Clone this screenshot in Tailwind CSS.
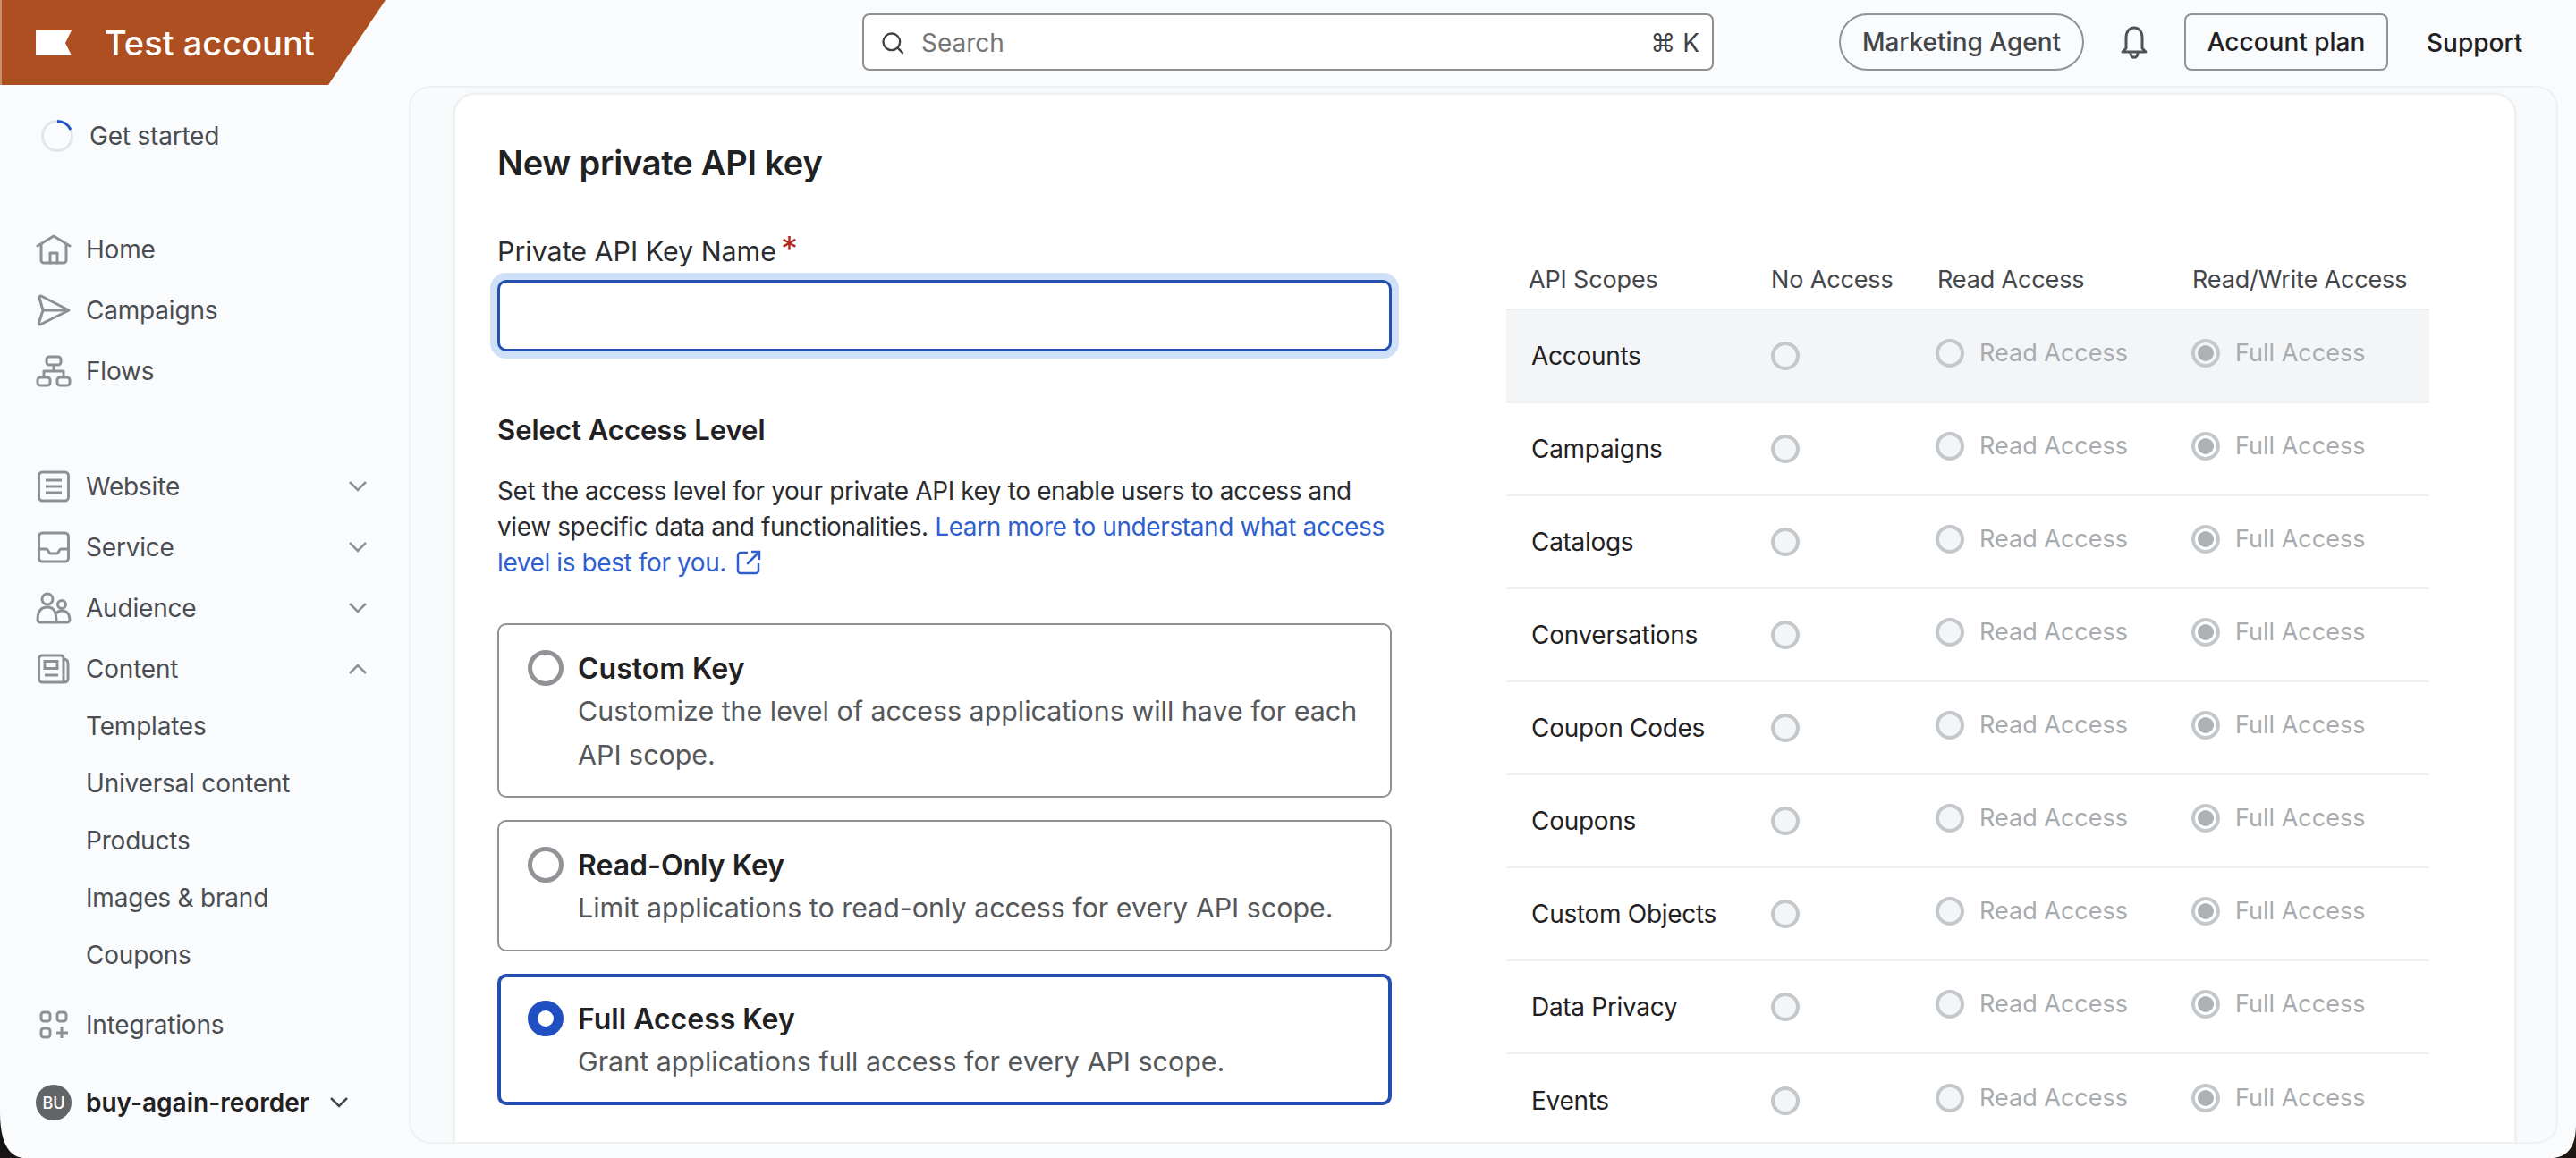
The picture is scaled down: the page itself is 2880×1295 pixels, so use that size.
<!DOCTYPE html>
<html lang="en">
<head>
  <meta charset="UTF-8">
  <title>New private API key</title>
  <script src="https://cdn.jsdelivr.net/npm/@tailwindcss/browser@4"></script>
</head>
<body class="relative h-[1295px] w-[2880px] overflow-hidden bg-[#fafbfd] font-['Inter',sans-serif] text-[28px] text-[#1f2123]">

  <!-- Top bar -->
  <header class="flex h-[96px] items-start">
    <div class="flex h-[95px] w-[431px] items-center border-l-2 border-[#c98f70] bg-[#ad4f20] pl-[38px] [clip-path:polygon(0_0,100%_0,367px_100%,0_100%)]">
      <svg class="h-[28px] w-[40px]" viewBox="0 0 40 28"><path fill="#fff" d="M0 0H40L33 14L40 28H0Z"/></svg>
      <span class="ml-[37px] text-[38px] leading-[48px] font-medium text-white">Test account</span>
    </div>
    <div class="ml-[533px] mt-[15px] flex h-[64px] w-[952px] items-center rounded-[8px] border-2 border-[#8d8f91] bg-white pl-[18px] pr-[14px] pt-[2px]">
      <svg class="h-[28px] w-[28px] text-[#3f4245]" viewBox="0 0 24 24" fill="none" stroke="currentColor" stroke-width="2" stroke-linecap="round"><circle cx="11" cy="11" r="8"/><path d="M17 17l4.500 4.500"/></svg>
      <span class="ml-[18px] text-[#747678]">Search</span>
      <span class="ml-auto text-[#3f4245]">⌘ K</span>
    </div>
    <div class="ml-[140px] mt-[15px] flex h-[64px] w-[274px] items-center justify-center rounded-full border-2 border-[#909294] font-medium text-[#43464a]">Marketing Agent</div>
    <svg class="ml-[38px] mt-[29px] h-[38px] w-[36px] text-[#505356]" viewBox="0 0 36 38" fill="none" stroke="currentColor" stroke-width="3" stroke-linejoin="round"><path d="M9 25V13C9 6 13 2 18 2s9 4 9 11v12l4 4H5Z"/><path d="M14 30c0 7 8 7 8 0"/></svg>
    <div class="ml-[38px] mt-[15px] flex h-[64px] w-[228px] items-center justify-center rounded-[8px] border-2 border-[#909294] font-medium">Account plan</div>
    <span class="ml-[43px] mt-[27px] font-medium">Support</span>
  </header>

  <div class="flex h-[1183px]">
    <!-- Sidebar -->
    <aside class="flex w-[457px] shrink-0 flex-col pl-[40px] tracking-[-0.2px] text-[#4a4d51]">
      <div class="mt-[38px] flex h-[36px] items-center">
        <svg class="ml-[6px] h-[36px] w-[36px]" viewBox="0 0 36 36" fill="none" stroke-width="3"><circle cx="18" cy="18" r="16.500" stroke="#e4e6e9"/><path d="M18 1.500A16.500 16.500 0 0 1 33 11" stroke="#2456c9"/></svg>
        <span class="ml-[18px]">Get started</span>
      </div>

      <nav class="mt-[75px] flex flex-col">
        <a class="flex h-[68px] items-center"><svg class="h-[34px] w-[40px] text-[#8e9194]" viewBox="0 0 40 34" fill="none" stroke="currentColor" stroke-width="3" stroke-linecap="round" stroke-linejoin="round"><path d="M2 13 20 2l18 11"/><path d="M6 11v18a3 3 0 0 0 3 3h22a3 3 0 0 0 3-3V11"/><path d="M16 32V21h8v11"/></svg><span class="ml-[16px]">Home</span></a>
        <a class="flex h-[68px] items-center"><svg class="h-[36px] w-[40px] text-[#8e9194]" viewBox="0 0 40 36" fill="none" stroke="currentColor" stroke-width="3" stroke-linejoin="round"><path d="M6 2 37 18 5 34c-1 0-1.500-1-1.500-2L8 18 4 4c0-1.500 1-2 2-2Z"/><path d="M8 18h29"/></svg><span class="ml-[16px]">Campaigns</span></a>
        <a class="flex h-[68px] items-center"><svg class="h-[36px] w-[40px] text-[#8e9194]" viewBox="0 0 40 36" fill="none" stroke="currentColor" stroke-width="3" stroke-linejoin="round"><rect x="12" y="2" width="16" height="9" rx="3"/><rect x="2" y="25" width="14" height="9" rx="3"/><rect x="24" y="25" width="14" height="9" rx="3"/><path d="M20 11v7M9 25v-7h22v7"/></svg><span class="ml-[16px]">Flows</span></a>
      </nav>

      <nav class="mt-[61px] flex flex-col">
        <a class="flex h-[68px] items-center"><svg class="h-[36px] w-[40px] text-[#8e9194]" viewBox="0 0 40 36" fill="none" stroke="currentColor" stroke-width="3"><rect x="3.500" y="2" width="33" height="32" rx="4"/><path d="M11 11h18M11 18h18M11 25h18"/></svg><span class="ml-[16px]">Website</span><svg class="ml-auto mr-[47px] h-[12px] w-[20px] text-[#8e9194]" viewBox="0 0 20 12" fill="none" stroke="currentColor" stroke-width="2.500"><path d="M1 1l9 9 9-9"/></svg></a>
        <a class="flex h-[68px] items-center"><svg class="h-[36px] w-[40px] text-[#8e9194]" viewBox="0 0 40 36" fill="none" stroke="currentColor" stroke-width="3"><rect x="3.500" y="2" width="33" height="32" rx="4"/><path d="M4 20h8c2 0 2 5 5 5h6c3 0 3-5 5-5h8"/></svg><span class="ml-[16px]">Service</span><svg class="ml-auto mr-[47px] h-[12px] w-[20px] text-[#8e9194]" viewBox="0 0 20 12" fill="none" stroke="currentColor" stroke-width="2.500"><path d="M1 1l9 9 9-9"/></svg></a>
        <a class="flex h-[68px] items-center"><svg class="h-[36px] w-[40px] text-[#8e9194]" viewBox="0 0 40 36" fill="none" stroke="currentColor" stroke-width="3" stroke-linejoin="round"><circle cx="13" cy="8" r="6"/><circle cx="29" cy="14" r="4.500"/><path d="M2 31c0-8 3-14 11-14s10 6 10 17H5a3 3 0 0 1-3-3Z"/><path d="M23 34h12a3 3 0 0 0 3-3c0-6-3-10-9-10-3 0-5 1-6 3"/></svg><span class="ml-[16px]">Audience</span><svg class="ml-auto mr-[47px] h-[12px] w-[20px] text-[#8e9194]" viewBox="0 0 20 12" fill="none" stroke="currentColor" stroke-width="2.500"><path d="M1 1l9 9 9-9"/></svg></a>
        <a class="flex h-[68px] items-center"><svg class="h-[34px] w-[40px] text-[#8e9194]" viewBox="0 0 40 34" fill="none" stroke="currentColor" stroke-width="3"><path d="M8 2h20a3 3 0 0 1 3 3v27H8a4 4 0 0 1-4.500-4V6A4 4 0 0 1 8 2Z"/><path d="M31 6c3 0 5 2 5 5v17c0 3-2 4-5 4"/><rect x="10" y="8.500" width="14" height="8"/><path d="M10 24h15"/></svg><span class="ml-[16px]">Content</span><svg class="ml-auto mr-[47px] h-[12px] w-[20px] text-[#8e9194]" viewBox="0 0 20 12" fill="none" stroke="currentColor" stroke-width="2.500"><path d="M1 11l9-9 9 9"/></svg></a>
      </nav>

      <div class="mt-[-2px] flex flex-col pl-[56px]">
        <a class="flex h-[64px] items-center">Templates</a>
        <a class="flex h-[64px] items-center">Universal content</a>
        <a class="flex h-[64px] items-center">Products</a>
        <a class="flex h-[64px] items-center">Images &amp; brand</a>
        <a class="flex h-[64px] items-center">Coupons</a>
      </div>

      <a class="mt-[12px] flex h-[68px] items-center"><svg class="h-[32px] w-[40px] text-[#8e9194]" viewBox="0 0 40 32" fill="none" stroke="currentColor" stroke-width="3"><rect x="6" y="2" width="10" height="10" rx="3"/><rect x="24" y="2" width="10" height="10" rx="3"/><rect x="6" y="20" width="10" height="10" rx="3"/><path d="M29 18v13M23 25h13"/></svg><span class="ml-[16px]">Integrations</span></a>

      <div class="mt-[33px] flex h-[40px] items-center tracking-normal">
        <span class="flex h-[40px] w-[40px] items-center justify-center rounded-full bg-[#636467] text-[18px] font-medium text-white">BU</span>
        <span class="ml-[16px] font-semibold text-[#1f2123]">buy-again-reorder</span>
        <svg class="ml-[23px] h-[12px] w-[20px] text-[#44474a]" viewBox="0 0 20 12" fill="none" stroke="currentColor" stroke-width="2.500"><path d="M1 1l9 9 9-9"/></svg>
      </div>
    </aside>

    <!-- Content panel -->
    <main class="h-full w-[2403px] overflow-hidden rounded-[24px] border-2 border-[#eef0f2] bg-[#f9fafc] pl-[48px] pr-[45px] pt-[6px]">
      <section class="flex h-[1250px] rounded-[24px] border-2 border-[#eef0f2] bg-white pl-[47px] pr-[95px] shadow-sm">
        <!-- Form column -->
        <div class="w-[1000px] shrink-0">
          <h1 class="mt-[54px] text-[38px] leading-[44px] font-semibold tracking-[-0.2px]">New private API key</h1>
          <label class="mt-[57px] block text-[30.400px] leading-[40px] text-[#2a2c2f]">Private API Key Name<span class="ml-[5px] text-[38px] leading-[0] text-[#b3261e]">*</span></label>
          <div class="mt-[12px] h-[80px] rounded-[10px] border-[3px] border-[#2350b0] bg-white ring-[8px] ring-[#cfe1f8]"></div>
          <h2 class="mt-[68px] text-[31px] leading-[40px] font-semibold">Select Access Level</h2>
          <p class="mt-[28px] leading-[40px] tracking-[-0.4px] text-[#2a2c2f]">Set the access level for your private API key to enable users to access and view specific data and functionalities. <a class="text-[#2f5fcf]">Learn more to understand what access level is best for you. <svg class="ml-[4px] inline h-[28px] w-[28px] align-[-4px]" viewBox="0 0 28 28" fill="none" stroke="currentColor" stroke-width="2.500" stroke-linecap="round"><path d="M12 3H5a3 3 0 0 0-3 3v17a3 3 0 0 0 3 3h17a3 3 0 0 0 3-3v-7"/><path d="M13 15 26 2M18 2h8v8"/></svg></a></p>

          <div class="mt-[48px] flex flex-col gap-[25px]">
            <div class="flex h-[195px] gap-[16px] rounded-[10px] border-2 border-[#8f9193] pl-[32px] pr-[20px] pt-[29px]">
              <span class="mt-[-1px] h-[40px] w-[40px] shrink-0 rounded-full border-[5px] border-[#919396]"></span>
              <div><h3 class="text-[32px] leading-[40px] font-semibold">Custom Key</h3><p class="mt-[3px] text-[30.400px] leading-[49px] text-[#55585b]">Customize the level of access applications will have for each API scope.</p></div>
            </div>
            <div class="flex h-[147px] gap-[16px] rounded-[10px] border-2 border-[#8f9193] pl-[32px] pr-[20px] pt-[29px]">
              <span class="mt-[-1px] h-[40px] w-[40px] shrink-0 rounded-full border-[5px] border-[#919396]"></span>
              <div><h3 class="text-[32px] leading-[40px] font-semibold">Read-Only Key</h3><p class="mt-[3px] text-[30.400px] leading-[49px] text-[#55585b]">Limit applications to read-only access for every API scope.</p></div>
            </div>
            <div class="flex h-[147px] gap-[16px] rounded-[10px] border-[4px] border-[#2350b0] pl-[30px] pr-[20px] pt-[27px]">
              <span class="mt-[-1px] h-[40px] w-[40px] shrink-0 rounded-full border-[11px] border-[#1f4fc0]"></span>
              <div><h3 class="text-[32px] leading-[40px] font-semibold">Full Access Key</h3><p class="mt-[3px] text-[30.400px] leading-[49px] text-[#55585b]">Grant applications full access for every API scope.</p></div>
            </div>
          </div>
        </div>

        <!-- Scope table -->
        <div class="ml-[128px] w-[1032px] shrink-0 pt-[187px]">
          <div class="grid h-[52px] grid-cols-[296px_186px_285px_1fr] pl-[25px] text-[27px] leading-[40px] tracking-[-0.15px] text-[#43464a]">
            <span>API Scopes</span><span class="ml-[-25px]">No Access</span><span class="ml-[-25px]">Read Access</span><span class="ml-[-25px]">Read/Write Access</span>
          </div>
          <div class="border-t-[2px] border-[#eef0f2] tracking-[-0.3px]">
            <div class="grid h-[104px] grid-cols-[296px_186px_286px_1fr] items-center border-b-2 border-[#eef0f2] bg-[#f3f5f7] pl-[28px]"><span>Accounts</span><span class="ml-[-28px] h-[32px] w-[32px] rounded-full border-[4px] border-[#c5c8cb] bg-[#f3f5f7]"></span><span class="ml-[-30px] mt-[-6px] flex items-center gap-[17px] text-[27px] tracking-normal text-[#a9acaf]"><i class="h-[32px] w-[32px] rounded-full border-[4px] border-[#c5c8cb]"></i>Read Access</span><span class="ml-[-30px] mt-[-6px] flex items-center gap-[17px] text-[27px] tracking-normal text-[#a9acaf]"><i class="h-[32px] w-[32px] rounded-full border-[4px] border-[#c5c8cb] bg-[#aeb1b4] [background-clip:content-box] p-[3px]"></i>Full Access</span></div>
            <div class="grid h-[104px] grid-cols-[296px_186px_286px_1fr] items-center border-b-2 border-[#eef0f2] pl-[28px]"><span>Campaigns</span><span class="ml-[-28px] h-[32px] w-[32px] rounded-full border-[4px] border-[#c5c8cb] bg-[#f3f5f7]"></span><span class="ml-[-30px] mt-[-6px] flex items-center gap-[17px] text-[27px] tracking-normal text-[#a9acaf]"><i class="h-[32px] w-[32px] rounded-full border-[4px] border-[#c5c8cb] bg-[#f3f5f7]"></i>Read Access</span><span class="ml-[-30px] mt-[-6px] flex items-center gap-[17px] text-[27px] tracking-normal text-[#a9acaf]"><i class="h-[32px] w-[32px] rounded-full border-[4px] border-[#c5c8cb] bg-[#aeb1b4] [background-clip:content-box] p-[3px]"></i>Full Access</span></div>
            <div class="grid h-[104px] grid-cols-[296px_186px_286px_1fr] items-center border-b-2 border-[#eef0f2] pl-[28px]"><span>Catalogs</span><span class="ml-[-28px] h-[32px] w-[32px] rounded-full border-[4px] border-[#c5c8cb] bg-[#f3f5f7]"></span><span class="ml-[-30px] mt-[-6px] flex items-center gap-[17px] text-[27px] tracking-normal text-[#a9acaf]"><i class="h-[32px] w-[32px] rounded-full border-[4px] border-[#c5c8cb] bg-[#f3f5f7]"></i>Read Access</span><span class="ml-[-30px] mt-[-6px] flex items-center gap-[17px] text-[27px] tracking-normal text-[#a9acaf]"><i class="h-[32px] w-[32px] rounded-full border-[4px] border-[#c5c8cb] bg-[#aeb1b4] [background-clip:content-box] p-[3px]"></i>Full Access</span></div>
            <div class="grid h-[104px] grid-cols-[296px_186px_286px_1fr] items-center border-b-2 border-[#eef0f2] pl-[28px]"><span>Conversations</span><span class="ml-[-28px] h-[32px] w-[32px] rounded-full border-[4px] border-[#c5c8cb] bg-[#f3f5f7]"></span><span class="ml-[-30px] mt-[-6px] flex items-center gap-[17px] text-[27px] tracking-normal text-[#a9acaf]"><i class="h-[32px] w-[32px] rounded-full border-[4px] border-[#c5c8cb] bg-[#f3f5f7]"></i>Read Access</span><span class="ml-[-30px] mt-[-6px] flex items-center gap-[17px] text-[27px] tracking-normal text-[#a9acaf]"><i class="h-[32px] w-[32px] rounded-full border-[4px] border-[#c5c8cb] bg-[#aeb1b4] [background-clip:content-box] p-[3px]"></i>Full Access</span></div>
            <div class="grid h-[104px] grid-cols-[296px_186px_286px_1fr] items-center border-b-2 border-[#eef0f2] pl-[28px]"><span>Coupon Codes</span><span class="ml-[-28px] h-[32px] w-[32px] rounded-full border-[4px] border-[#c5c8cb] bg-[#f3f5f7]"></span><span class="ml-[-30px] mt-[-6px] flex items-center gap-[17px] text-[27px] tracking-normal text-[#a9acaf]"><i class="h-[32px] w-[32px] rounded-full border-[4px] border-[#c5c8cb] bg-[#f3f5f7]"></i>Read Access</span><span class="ml-[-30px] mt-[-6px] flex items-center gap-[17px] text-[27px] tracking-normal text-[#a9acaf]"><i class="h-[32px] w-[32px] rounded-full border-[4px] border-[#c5c8cb] bg-[#aeb1b4] [background-clip:content-box] p-[3px]"></i>Full Access</span></div>
            <div class="grid h-[104px] grid-cols-[296px_186px_286px_1fr] items-center border-b-2 border-[#eef0f2] pl-[28px]"><span>Coupons</span><span class="ml-[-28px] h-[32px] w-[32px] rounded-full border-[4px] border-[#c5c8cb] bg-[#f3f5f7]"></span><span class="ml-[-30px] mt-[-6px] flex items-center gap-[17px] text-[27px] tracking-normal text-[#a9acaf]"><i class="h-[32px] w-[32px] rounded-full border-[4px] border-[#c5c8cb] bg-[#f3f5f7]"></i>Read Access</span><span class="ml-[-30px] mt-[-6px] flex items-center gap-[17px] text-[27px] tracking-normal text-[#a9acaf]"><i class="h-[32px] w-[32px] rounded-full border-[4px] border-[#c5c8cb] bg-[#aeb1b4] [background-clip:content-box] p-[3px]"></i>Full Access</span></div>
            <div class="grid h-[104px] grid-cols-[296px_186px_286px_1fr] items-center border-b-2 border-[#eef0f2] pl-[28px]"><span>Custom Objects</span><span class="ml-[-28px] h-[32px] w-[32px] rounded-full border-[4px] border-[#c5c8cb] bg-[#f3f5f7]"></span><span class="ml-[-30px] mt-[-6px] flex items-center gap-[17px] text-[27px] tracking-normal text-[#a9acaf]"><i class="h-[32px] w-[32px] rounded-full border-[4px] border-[#c5c8cb] bg-[#f3f5f7]"></i>Read Access</span><span class="ml-[-30px] mt-[-6px] flex items-center gap-[17px] text-[27px] tracking-normal text-[#a9acaf]"><i class="h-[32px] w-[32px] rounded-full border-[4px] border-[#c5c8cb] bg-[#aeb1b4] [background-clip:content-box] p-[3px]"></i>Full Access</span></div>
            <div class="grid h-[104px] grid-cols-[296px_186px_286px_1fr] items-center border-b-2 border-[#eef0f2] pl-[28px]"><span>Data Privacy</span><span class="ml-[-28px] h-[32px] w-[32px] rounded-full border-[4px] border-[#c5c8cb] bg-[#f3f5f7]"></span><span class="ml-[-30px] mt-[-6px] flex items-center gap-[17px] text-[27px] tracking-normal text-[#a9acaf]"><i class="h-[32px] w-[32px] rounded-full border-[4px] border-[#c5c8cb] bg-[#f3f5f7]"></i>Read Access</span><span class="ml-[-30px] mt-[-6px] flex items-center gap-[17px] text-[27px] tracking-normal text-[#a9acaf]"><i class="h-[32px] w-[32px] rounded-full border-[4px] border-[#c5c8cb] bg-[#aeb1b4] [background-clip:content-box] p-[3px]"></i>Full Access</span></div>
            <div class="grid h-[104px] grid-cols-[296px_186px_286px_1fr] items-center pl-[28px]"><span>Events</span><span class="ml-[-28px] h-[32px] w-[32px] rounded-full border-[4px] border-[#c5c8cb] bg-[#f3f5f7]"></span><span class="ml-[-30px] mt-[-6px] flex items-center gap-[17px] text-[27px] tracking-normal text-[#a9acaf]"><i class="h-[32px] w-[32px] rounded-full border-[4px] border-[#c5c8cb] bg-[#f3f5f7]"></i>Read Access</span><span class="ml-[-30px] mt-[-6px] flex items-center gap-[17px] text-[27px] tracking-normal text-[#a9acaf]"><i class="h-[32px] w-[32px] rounded-full border-[4px] border-[#c5c8cb] bg-[#aeb1b4] [background-clip:content-box] p-[3px]"></i>Full Access</span></div>
          </div>
        </div>
      </section>
    </main>
  </div>

  <!-- Rounded window corners over the page -->
  <svg class="absolute bottom-0 left-0 h-[50px] w-[28px]" viewBox="0 0 28 50"><path fill="#161412" d="M0 0C0 28 8 50 28 50H0Z"/></svg>
  <svg class="absolute bottom-0 right-0 h-[37px] w-[28px]" viewBox="0 0 28 37"><path fill="#1d1611" d="M28 0C28 22 20 37 0 37H28Z"/></svg>
</body>
</html>
